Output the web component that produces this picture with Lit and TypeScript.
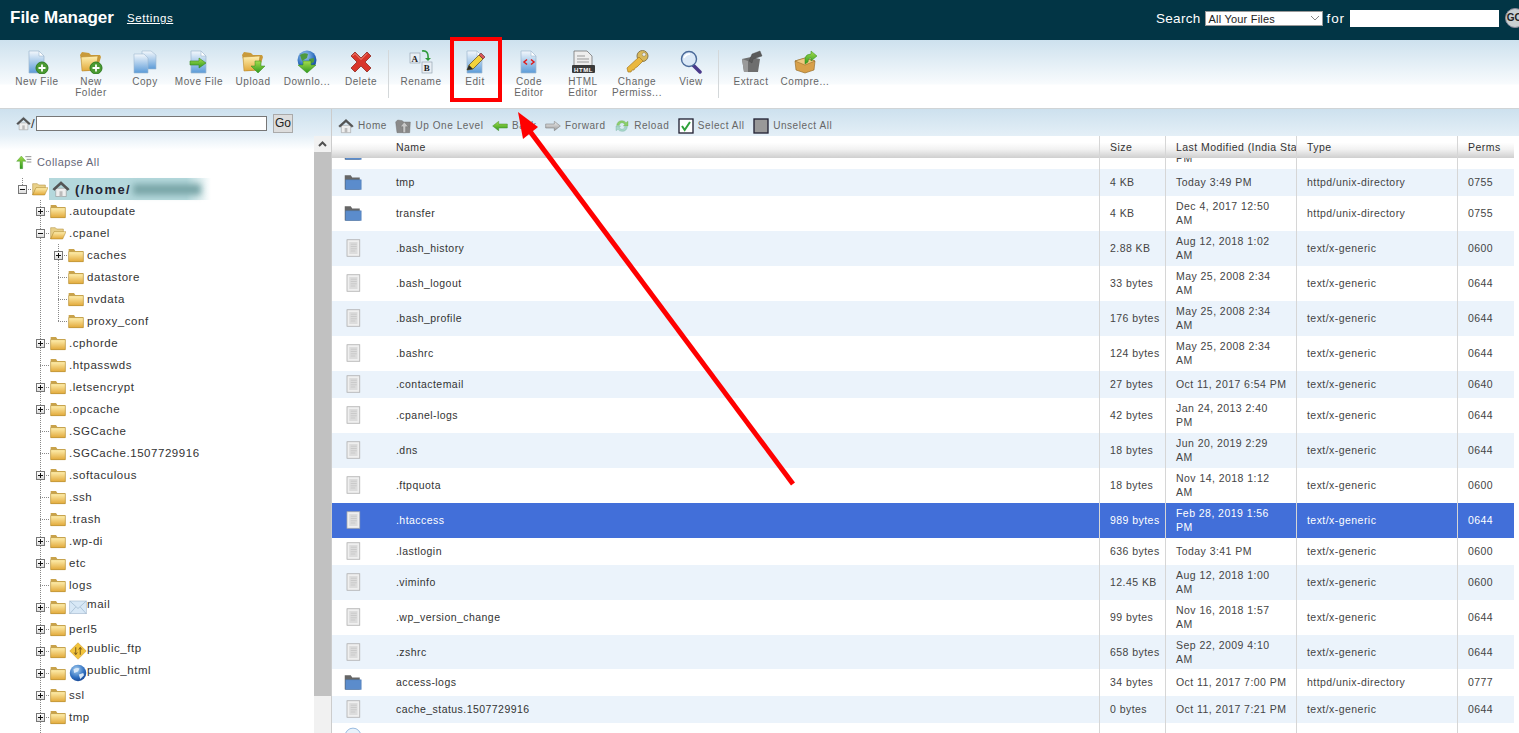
import { LitElement, html, css, svg } from "lit";
import { customElement } from "lit/decorators.js";

const defs = svg`
  <linearGradient id="paper" x1="0" y1="0" x2="0" y2="1"><stop offset="0" stop-color="#f4f8fc"/><stop offset="1" stop-color="#5b9bd8"/></linearGradient>
  <linearGradient id="fold" x1="0" y1="0" x2="0" y2="1"><stop offset="0" stop-color="#fff0b0"/><stop offset="1" stop-color="#e2a93a"/></linearGradient>
  <linearGradient id="grn" x1="0" y1="0" x2="0" y2="1"><stop offset="0" stop-color="#a5dc4c"/><stop offset="1" stop-color="#2f9a1e"/></linearGradient>
  <linearGradient id="gry" x1="0" y1="0" x2="0" y2="1"><stop offset="0" stop-color="#f0f0f0"/><stop offset="1" stop-color="#9a9a9a"/></linearGradient>
  <radialGradient id="globe" cx=".4" cy=".3" r=".8"><stop offset="0" stop-color="#a9d2f2"/><stop offset=".6" stop-color="#2f6fc0"/><stop offset="1" stop-color="#123d88"/></radialGradient>
`;

// shared gradients live in one hidden svg at the top of the page
const doc = (extra: unknown = "") => svg`
  <path d="M4 1h10l5 5v17H4z" fill="url(#paper)" stroke="#9fb8d0" stroke-width=".7"/>
  <path d="M14 1v5h5z" fill="#fff" stroke="#9fb8d0" stroke-width=".6"/>
  ${extra}`;

const plusBadge = svg`
  <circle cx="17" cy="18" r="6" fill="#4a9a32" stroke="#2f7d20"/>
  <path d="M17 14.500v7M13.500 18h7" stroke="#fff" stroke-width="1.800"/>`;

const yellowFolder = svg`
  <path d="M1 5l2-3 7 1 2 2 9 0 1 2-4 13-13 1z" fill="#c99a3a"/>
  <path d="M2 7l17-1-2 14-14 1z" fill="url(#fold)" stroke="#b98a2e" stroke-width=".6"/>`;

const icons: Record<string, unknown> = {
  newfile: svg`${doc()}${plusBadge}`,
  newfolder: svg`${yellowFolder}${plusBadge}`,
  copy: svg`
    <path d="M9 1h9l5 4v14H9z" fill="url(#paper)" stroke="#9fb8d0" stroke-width=".6"/>
    <path d="M1 4h10l4 4v15H1z" fill="url(#paper)" stroke="#9fb8d0" stroke-width=".6"/>`,
  move: svg`${doc(svg`<path d="M3 11h9V8l7 5-7 5v-3H3z" fill="url(#grn)" stroke="#3b8a22" stroke-width=".6"/>`)}`,
  upload: svg`${yellowFolder}<path d="M14 11h6v5h4l-7 7-7-7h4z" fill="url(#grn)" stroke="#2f8a1e" stroke-width=".5"/>`,
  download: svg`
    <circle cx="12" cy="10" r="9.500" fill="url(#globe)"/>
    <path d="M5 5q4-3 8-1l-1 4-5 3zM14 9l5-1 0 4-4 2z" fill="#4f9a3e"/>
    <path d="M8 11h8v4h5l-9 8-9-8h5z" fill="url(#grn)" stroke="#2f8a1e" stroke-width=".5"/>`,
  delete: svg`<path d="M2 6l4-4 6 6 6-6 4 4-6 6 6 6-4 4-6-6-6 6-4-4 6-6z" fill="#d8352a" stroke="#8e2a20" stroke-width=".8"/>
    <path d="M3.500 6l2.500-2.500 6 6 6-6" fill="none" stroke="#f28b7a" stroke-width="1"/>`,
  rename: svg`
    <rect x="1" y="3" width="10" height="10" fill="#e8eef4" stroke="#8a9aa8" stroke-width=".6"/>
    <text x="6" y="11.500" font-size="9" font-weight="700" text-anchor="middle" font-family="Liberation Serif" fill="#222">A</text>
    <rect x="13" y="12" width="10" height="11" fill="#e8eef4" stroke="#8a9aa8" stroke-width=".6"/>
    <text x="18" y="21" font-size="9" font-weight="700" text-anchor="middle" font-family="Liberation Serif" fill="#222">B</text>
    <path d="M13 1q7-1 6 8" fill="none" stroke="#2f9a3a" stroke-width="1.600"/><path d="M16 8h6l-3 3z" fill="#2f9a3a"/>`,
  edit: svg`${doc(svg`
    <path d="M4 20l2-5L16 5l4 4-10 10z" fill="#f3d23c" stroke="#5a4a1a" stroke-width=".7"/>
    <path d="M16 5l2-2 4 4-2 2z" fill="#d8585a" stroke="#5a2a2a" stroke-width=".6"/>
    <path d="M4 20l2-5 4 4z" fill="#2a2a2a"/>`)}`,
  code: svg`${doc(svg`<path d="M10 9.500l-3 2.500 3 2.500M14 9.500l3 2.500-3 2.500" fill="none" stroke="#e01818" stroke-width="1.500"/>`)}`,
  htmled: svg`
    <path d="M3 1h13l5 5v11H3z" fill="#eee" stroke="#666" stroke-width=".7"/>
    <path d="M6 6h8M6 9h12M6 12h12" stroke="#999"/>
    <rect x="1" y="15" width="23" height="8" rx="1" fill="#3a3a3a"/>
    <text x="12.500" y="21.500" font-size="6" font-weight="700" text-anchor="middle" font-family="Liberation Sans" fill="#fff">HTML</text>`,
  key: svg`
    <circle cx="17.500" cy="6" r="5.500" fill="#d8b85a" stroke="#8a7a50"/>
    <circle cx="19" cy="4.500" r="1.800" fill="#e8eef4" stroke="#8a7a50" stroke-width=".5"/>
    <path d="M14 7L2 18l1 4 3 0 1-2 2 0 1-2 2-1 6-6z" fill="#eab83e" stroke="#a67a20" stroke-width=".7"/>`,
  view: svg`
    <path d="M14 15l7 7" stroke="#4a3a8a" stroke-width="3.500" stroke-linecap="round"/>
    <circle cx="10" cy="9" r="7.500" fill="#dbe9f7" stroke="#4a6a9a" stroke-width="1.400"/>
    <path d="M5 8q2-4 6-4" fill="none" stroke="#fff" stroke-width="1.600"/>`,
  extract: svg`
    <path d="M3 9l9-2 9 2-2 13H5z" fill="#6e6e6e"/>
    <path d="M3 9l6 2v11H5z" fill="#9a9a9a"/>
    <path d="M10 11l3-7 8-3 2 5-9 3-1 4z" fill="#5a5a5a" stroke="#444" stroke-width=".4"/>`,
  compress: svg`
    <path d="M2 11l10-3 10 3-1 9-9 3-9-3z" fill="#d8a04a" stroke="#8e6420" stroke-width=".6"/>
    <path d="M2 11l10 4 10-4-10-3z" fill="#f0c880" stroke="#8e6420" stroke-width=".5"/>
    <path d="M12 14V8q1-4 6-4V1l6 5-6 5V8q-3 0-3 4z" fill="url(#grn)" stroke="#2f8a1e" stroke-width=".5"/>`,
  home: svg`
    <path d="M5 11h14v11H5z" fill="#eee" stroke="#888" stroke-width=".7"/>
    <path d="M1 12L12 2l11 10-2 2-9-8-9 8z" fill="#555" stroke="#333" stroke-width=".5"/>
    <path d="M10 15h4v7h-4z" fill="#bbb"/>`,
  up: svg`
    <path d="M1 6l3-3 7 1 2 2 10 0-1 16H3z" fill="#8a8a8a" stroke="#666" stroke-width=".6"/>
    <path d="M12 22V13H8l6-7 6 7h-4v9z" fill="#c8c8c8" stroke="#666" stroke-width=".6"/>`,
  back: svg`<path d="M1 12l9-7v4h13v6H10v4z" fill="url(#grn)" stroke="#3b8a22" stroke-width=".7"/>`,
  forward: svg`<path d="M23 12l-9-7v4H1v6h13v4z" fill="url(#gry)" stroke="#777" stroke-width=".8"/>`,
  reload: svg`
    <path d="M4 11q1-7 8-7 4 0 6 3l3-2v7h-7l2-2q-1-3-4-3-4 0-4 4z" fill="#8ccf6a" stroke="#5aa24a" stroke-width=".5"/>
    <path d="M20 13q-1 7-8 7-4 0-6-3l-3 2v-7h7l-2 2q1 3 4 3 4 0 4-4z" fill="#a8d8c8" stroke="#6aa89a" stroke-width=".5"/>`,
  selectall: svg`
    <rect x="1.500" y="1.500" width="21" height="21" fill="#fff" stroke="#223" stroke-width="2"/>
    <path d="M6 12l4 6 8-12" fill="none" stroke="#2fa13a" stroke-width="3"/>`,
  unselect: svg`<rect x="1.500" y="1.500" width="21" height="21" fill="#999" stroke="#223" stroke-width="2"/>`,
  collapse: svg`
    <path d="M6 22V11H1l7-8 7 8h-5v11z" fill="url(#grn)" stroke="#2f8a1e" stroke-width=".5"/>
    <path d="M14 4h9M16 8h7M16 12h7" stroke="#888" stroke-width="1.400"/>`,
  closed: svg`
    <path d="M1 6V3h8l2 3h12v16H1z" fill="#c9a24a"/>
    <path d="M1 7h22v15H1z" fill="url(#fold)" stroke="#a98020" stroke-width=".7"/>`,
  open: svg`
    <path d="M1 21V4h7l2 2h10v5H6z" fill="#e8d08a" stroke="#a98020" stroke-width=".7"/>
    <path d="M1 21l5-11h18l-5 11z" fill="url(#fold)" stroke="#a98020" stroke-width=".7"/>`,
  mail: svg`
    <rect x="1" y="4" width="22" height="17" fill="#d8e8f6" stroke="#9ab0c4" stroke-width=".7"/>
    <path d="M1 4l11 10L23 4M1 21l8-9M23 21l-8-9" fill="none" stroke="#8aa6c0" stroke-width=".7"/>`,
  ftp: svg`
    <path d="M12 1l11 11-11 11L1 12z" fill="#f2c43c" stroke="#c9962a" stroke-width=".7"/>
    <path d="M9 7v9M7 14l2 3 2-3M15 17V8M13 10l2-3 2 3" fill="none" stroke="#7a5a1a" stroke-width="1.300"/>`,
  www: svg`
    <circle cx="12" cy="12" r="11" fill="url(#globe)"/>
    <path d="M6 7q5-3 8-1l-2 4-5 2zM13 14l6-2 1 3-5 5z" fill="#d8e8f8"/>`,
  blueFolder: svg`
    <path d="M1 22V3h8l2 3h10v16z" fill="#666"/>
    <path d="M2 9h21v13H2z" fill="#5b8ccc" stroke="#4a74ad" stroke-width=".6"/>`,
  file: svg`
    <rect x="4" y="1" width="17" height="22" fill="#efefef" stroke="#aaa" stroke-width="1"/>
    <rect x="7" y="4" width="11" height="16" fill="#dcdcdc"/>
    <path d="M9 7h8M9 10h8M9 13h8M9 16h6" stroke="#c4c4c4"/>`,
  webfile: svg`
    <circle cx="12" cy="12" r="10.500" fill="#e8f2fb" stroke="#7aa6d6"/>`,
};

const icon = (name: string, size = 16) =>
  html`<svg class="ico" width=${size} height=${size} viewBox="0 0 24 24">${icons[name]}</svg>`;

const tools: (string[] | null)[] = [
  ["newfile", "New File"],
  ["newfolder", "New Folder"],
  ["copy", "Copy"],
  ["move", "Move File"],
  ["upload", "Upload"],
  ["download", "Downlo..."],
  ["delete", "Delete"],
  null,
  ["rename", "Rename"],
  ["edit", "Edit"],
  ["code", "Code Editor"],
  ["htmled", "HTML Editor"],
  ["key", "Change Permiss..."],
  ["view", "View"],
  null,
  ["extract", "Extract"],
  ["compress", "Compre..."],
];

const navItems = [
  ["home", "Home"],
  ["up", "Up One Level"],
  ["back", "Back"],
  ["forward", "Forward"],
  ["reload", "Reload"],
  ["selectall", "Select All"],
  ["unselect", "Unselect All"],
];

// depth, label, state (+ has children, - open, blank leaf), extra icon, last child
const tree: [number, string, string, string?, boolean?][] = [
  [1, ".autoupdate", "+"],
  [1, ".cpanel", "-"],
  [2, "caches", "+"],
  [2, "datastore", ""],
  [2, "nvdata", ""],
  [2, "proxy_conf", "", undefined, true],
  [1, ".cphorde", "+"],
  [1, ".htpasswds", ""],
  [1, ".letsencrypt", "+"],
  [1, ".opcache", "+"],
  [1, ".SGCache", ""],
  [1, ".SGCache.1507729916", ""],
  [1, ".softaculous", "+"],
  [1, ".ssh", ""],
  [1, ".trash", ""],
  [1, ".wp-di", "+"],
  [1, "etc", "+"],
  [1, "logs", ""],
  [1, "mail", "+", "mail"],
  [1, "perl5", "+"],
  [1, "public_ftp", "+", "ftp"],
  [1, "public_html", "+", "www"],
  [1, "ssl", "+"],
  [1, "tmp", "+"],
  [1, "", "+"],
];

const dir = "httpd/unix-directory";
const txt = "text/x-generic";
// name, size, modified, type, perms, row class
const files: string[][] = [
  ["tmp", "4 KB", "Today 3:49 PM", dir, "0755", "short"],
  ["transfer", "4 KB", "Dec 4, 2017 12:50 AM", dir, "0755", "tall"],
  [".bash_history", "2.88 KB", "Aug 12, 2018 1:02 AM", txt, "0600", "tall"],
  [".bash_logout", "33 bytes", "May 25, 2008 2:34 AM", txt, "0644", "tall"],
  [".bash_profile", "176 bytes", "May 25, 2008 2:34 AM", txt, "0644", "tall"],
  [".bashrc", "124 bytes", "May 25, 2008 2:34 AM", txt, "0644", "tall"],
  [".contactemail", "27 bytes", "Oct 11, 2017 6:54 PM", txt, "0640", "short"],
  [".cpanel-logs", "42 bytes", "Jan 24, 2013 2:40 PM", txt, "0644", "tall"],
  [".dns", "18 bytes", "Jun 20, 2019 2:29 AM", txt, "0644", "tall"],
  [".ftpquota", "18 bytes", "Nov 14, 2018 1:12 AM", txt, "0600", "tall"],
  [".htaccess", "989 bytes", "Feb 28, 2019 1:56 PM", txt, "0644", "tall picked"],
  [".lastlogin", "636 bytes", "Today 3:41 PM", txt, "0600", "short"],
  [".viminfo", "12.45 KB", "Aug 12, 2018 1:00 AM", txt, "0600", "tall"],
  [".wp_version_change", "99 bytes", "Nov 16, 2018 1:57 AM", txt, "0644", "tall"],
  [".zshrc", "658 bytes", "Sep 22, 2009 4:10 AM", txt, "0644", "tall z"],
  ["access-logs", "34 bytes", "Oct 11, 2017 7:00 PM", dir, "0777", "short"],
  ["cache_status.1507729916", "0 bytes", "Oct 11, 2017 7:21 PM", txt, "0644", "short"],
];

@customElement("app-root")
export class AppRoot extends LitElement {
  static styles = css`
    :host {
      display: block;
      height: 100vh;
      overflow: hidden;
      position: relative;
      font-family: "Liberation Sans", Arial, sans-serif;
      background: #fff;
    }
    .ico { display: block; flex: none; }
    .defs { width: 0; height: 0; display: block; }

    .top {
      height: 40px;
      box-sizing: border-box;
      padding: 0 0 4px 10px;
      background: #023545;
      color: #fff;
      display: flex;
      align-items: center;
    }
    .title { font-size: 17px; font-weight: 700; }
    .settings {
      font-size: 11.5px;
      margin-left: 13px;
      color: #fff;
      text-decoration: underline;
      letter-spacing: .6px;
    }
    .search {
      margin-left: auto;
      display: flex;
      align-items: center;
      font-size: 13.5px;
      letter-spacing: .3px;
      width: 363px;
      flex: none;
    }
    .for { letter-spacing: .8px; }
    .dropdown {
      width: 118px;
      flex: none;
      height: 15px;
      margin: 1px 4px 0 4px;
      background: #fff;
      border: 1px solid #999;
      box-sizing: border-box;
      color: #222;
      font-size: 11px;
      line-height: 14px;
      padding-left: 3px;
      letter-spacing: .2px;
      display: flex;
      justify-content: space-between;
      align-items: center;
    }
    .dropdown svg { margin-right: 3px; }
    .q { width: 149px; height: 17px; background: #fff; margin: 0 6px 0 5px; flex: none; }
    .go {
      width: 20px;
      height: 20px;
      flex: none;
      border-radius: 50%;
      background: #c9d0d2;
      border: 1px solid #889;
      box-sizing: border-box;
      color: #222;
      font-size: 10px;
      font-weight: 700;
      line-height: 18px;
      padding-left: 1px;
      overflow: hidden;
      letter-spacing: 0;
    }

    .toolbar {
      height: 69px;
      box-sizing: border-box;
      background: linear-gradient(#cde1ee, #f8fbfd 44px, #fff 45px);
      border-bottom: 1px solid #d0d4d6;
      display: flex;
      padding: 10px 0 0 10px;
    }
    .tool {
      width: 54px;
      flex: none;
      display: flex;
      flex-direction: column;
      align-items: center;
      font-size: 10px;
      line-height: 11px;
      letter-spacing: .55px;
      color: #666;
      text-align: center;
    }
    .tool .ico { margin-bottom: 2px; }
    .tool span { width: 50px; }
    .sep { width: 1px; height: 48px; background: #d4d8da; flex: none; margin-right: 5px; }

    .main { display: flex; height: 624px; }
    .left {
      width: 331px;
      flex: none;
      display: flex;
      flex-direction: column;
      background: linear-gradient(#cde1ee, #e4eff7 26px, #fff 41px);
      border-right: 1px solid #ccc;
    }
    .path {
      height: 27px;
      flex: none;
      box-sizing: border-box;
      display: flex;
      align-items: center;
      padding: 2px 0 0 16px;
      font-size: 13px;
      color: #333;
    }
    .path .slash { width: 5px; }
    .path .field {
      width: 231px;
      height: 15px;
      box-sizing: border-box;
      background: #fff;
      border: 1px solid #777;
    }
    .path .gobtn {
      margin-left: 6px;
      width: 20px;
      height: 19px;
      box-sizing: border-box;
      background: #ddd;
      border: 1px solid #aaa;
      color: #222;
      font-size: 12px;
      line-height: 17px;
      text-align: center;
    }
    .leftbody { flex: 1; display: flex; min-height: 0; }
    .treewrap { width: 314px; flex: none; overflow: hidden; }
    .collapse {
      display: flex;
      align-items: center;
      gap: 5px;
      padding: 18px 0 0 16px;
      height: 16px;
      font-size: 11px;
      letter-spacing: .42px;
      color: #667;
    }
    .tree { margin-top: 8px; }
    .row {
      height: 22px;
      display: flex;
      align-items: center;
      padding-left: 13px;
      font-size: 11.5px;
      letter-spacing: .55px;
      color: #333;
      white-space: nowrap;
    }
    .row .cell {
      width: 18px;
      height: 22px;
      flex: none;
      display: flex;
      align-items: center;
      justify-content: center;
    }
    .vline {
      background: repeating-linear-gradient(#888 0 1px, transparent 1px 2px) 9px 0 / 1px 100% no-repeat;
    }
    .branch {
      background:
        repeating-linear-gradient(#888 0 1px, transparent 1px 2px) 9px 0 / 1px 100% no-repeat,
        repeating-linear-gradient(90deg, #888 0 1px, transparent 1px 2px) 9px 11px / 9px 1px no-repeat;
    }
    .branch.end {
      background:
        repeating-linear-gradient(#888 0 1px, transparent 1px 2px) 9px 0 / 1px 12px no-repeat,
        repeating-linear-gradient(90deg, #888 0 1px, transparent 1px 2px) 9px 11px / 9px 1px no-repeat;
    }
    .toggle {
      width: 9px;
      height: 9px;
      box-sizing: border-box;
      border: 1px solid #777;
      background: linear-gradient(#fff, #ddd);
      display: block;
    }
    .toggle svg { display: block; }
    .row .fold { margin-left: 1px; margin-right: 3px; width: 16px; }
    .row .fold.rootfold { margin-right: 1px; }
    .row .special { align-self: flex-start; margin-top: 2px; }
    .rootlabel {
      display: flex;
      align-items: center;
      height: 22px;
      width: 162px;
      background: linear-gradient(90deg, #b4d8dc 85%, #fff);
      font-weight: 700;
      font-size: 13px;
      letter-spacing: 1.4px;
      color: #223;
    }
    .rootlabel .ico { margin: 0 5px 0 3px; }
    .blurred {
      width: 68px;
      height: 11px;
      margin-left: 2px;
      background: #7aa6a8;
      filter: blur(3px);
    }
    .scroll {
      width: 17px;
      flex: none;
      background: #f1f1f1;
      display: flex;
      flex-direction: column;
      align-items: center;
    }
    .scroll .arrow { height: 16px; display: flex; align-items: center; }
    .scroll .thumb { width: 100%; height: 544px; background: #c1c1c1; }

    .right { flex: 1; min-width: 0; display: flex; flex-direction: column; }
    .nav {
      height: 27px;
      flex: none;
      box-sizing: border-box;
      padding: 6px 0 0 6px;
      background: linear-gradient(#cde1ee, #e4eff7);
      display: flex;
      align-items: center;
      gap: 8.5px;
      font-size: 10px;
      letter-spacing: .57px;
      color: #666;
    }
    .nav .item { display: flex; align-items: center; gap: 4px; }
    .grid {
      display: grid;
      grid-template-columns: 767px 66px 131px 161px 57px;
      width: 1182px;
    }
    .grid > div {
      box-sizing: border-box;
      border-left: 1px solid #d6d6d6;
      padding-left: 10px;
      display: flex;
      align-items: center;
      overflow: hidden;
    }
    .grid > div:first-child { border-left: 0; padding-left: 12px; }
    .head {
      height: 22px;
      background: linear-gradient(#fff 30%, #f2f2f2 60%, #cfcfcf);
      font-size: 10.5px;
      letter-spacing: .45px;
      color: #333;
      white-space: nowrap;
    }
    .head .nm { padding-left: 64px !important; }
    .body { flex: 1; overflow: hidden; }
    .file {
      font-size: 10.5px;
      line-height: 14px;
      letter-spacing: .45px;
      color: #444;
    }
    .file > div { height: 100%; padding-bottom: 1px; }
    .file.short { height: 27px; }
    .file.tall { height: 35px; }
    .file.z { height: 34px; }
    .file.cut { height: 11px; }
    .file.cut > div { align-items: flex-end; padding-bottom: 0; }
    .file.cut span { margin-bottom: 4px; }
    .file.cut .ico { margin-bottom: 8px; }
    .file.stripe { background: #ebf3fb; }
    .file.picked { background: #426fd9; color: #fff; }
    .file .name { gap: 34px; color: #333; }
    .file.picked .name { color: #fff; }
    .file .date { padding-right: 18px; }
    .file.short .date { padding-right: 0; white-space: nowrap; }

    .overlay { position: absolute; left: 0; top: 0; pointer-events: none; }
    .mark {
      position: absolute;
      left: 450px;
      top: 37px;
      width: 52px;
      height: 65px;
      box-sizing: border-box;
      border: 4px solid #f00;
    }
  `;

  renderRow(r: [number, string, string, string?, boolean?]) {
    const [depth, label, state, extra, last] = r;
    const isOpen = state === "-";
    return html`<div class="row">
      <span class="cell"></span>
      ${depth === 2 ? html`<span class="cell vline"></span>` : ""}
      <span class="cell ${last ? "branch end" : "branch"}">${state ? this.toggle(isOpen) : ""}</span>
      <span class="fold">${icon(isOpen ? "open" : "closed")}</span>
      ${extra ? html`<span>${icon(extra, 18)}</span>` : ""}
      <span class=${extra ? "special" : ""}>${label}</span>
    </div>`;
  }

  toggle(open: boolean) {
    return html`<span class="toggle"
      ><svg width="7" height="7" viewBox="0 0 7 7">
        <path d=${open ? "M1 3.500h5" : "M1 3.500h5M3.500 1v5"} stroke="#111" />
      </svg></span
    >`;
  }

  render() {
    return html`
      <svg class="defs">${defs}</svg>
      <div class="top">
        <span class="title">File Manager</span>
        <a class="settings">Settings</a>
        <div class="search">
          Search
          <div class="dropdown">
            All Your Files
            <svg width="8" height="5" viewBox="0 0 8 5"><path d="M0 0l4 4 4-4" fill="none" stroke="#888" /></svg>
          </div>
          <span class="for">for</span>
          <div class="q"></div>
          <div class="go">GO</div>
        </div>
      </div>

      <div class="toolbar">
        ${tools.map((t) =>
          t
            ? html`<div class="tool">${icon(t[0], 24)}<span>${t[1]}</span></div>`
            : html`<div class="sep"></div>`
        )}
      </div>

      <div class="main">
        <div class="left">
          <div class="path">
            ${icon("home", 15)}<span class="slash">/</span>
            <div class="field"></div>
            <div class="gobtn">Go</div>
          </div>
          <div class="leftbody">
            <div class="treewrap">
              <div class="collapse">${icon("collapse", 16)}Collapse All</div>
              <div class="tree">
                <div class="row">
                  <span class="cell branch end">${this.toggle(true)}</span>
                  <span class="fold rootfold">${icon("open")}</span>
                  <div class="rootlabel">${icon("home", 18)}(/home/<span class="blurred"></span></div>
                </div>
                ${tree.map((r) => this.renderRow(r))}
              </div>
            </div>
            <div class="scroll">
              <div class="arrow">
                <svg width="9" height="6" viewBox="0 0 9 6"><path d="M1 5l3.500-3.500L8 5" fill="none" stroke="#505050" stroke-width="2" /></svg>
              </div>
              <div class="thumb"></div>
            </div>
          </div>
        </div>

        <div class="right">
          <div class="nav">
            ${navItems.map((n) => html`<div class="item">${icon(n[0], 16)}${n[1]}</div>`)}
          </div>
          <div class="grid head">
            <div class="nm">Name</div>
            <div>Size</div>
            <div>Last Modified (India Standard Time)</div>
            <div>Type</div>
            <div>Perms</div>
          </div>
          <div class="body">
            <div class="grid file cut">
              <div class="name">${icon("blueFolder", 18)}</div>
              <div></div>
              <div><span>PM</span></div>
              <div></div><div></div>
            </div>
            ${files.map(
              (f, i) => html`<div class="grid file ${f[5]} ${i % 2 === 0 ? "stripe" : ""}">
                <div class="name">${icon(f[3] === dir ? "blueFolder" : "file", 18)}<span>${f[0]}</span></div>
                <div>${f[1]}</div>
                <div class="date">${f[2]}</div>
                <div>${f[3]}</div>
                <div>${f[4]}</div>
              </div>`
            )}
            <div class="grid file short">
              <div class="name">${icon("webfile", 18)}</div>
              <div></div><div></div><div></div><div></div>
            </div>
          </div>
        </div>
      </div>

      <div class="mark"></div>
      <svg class="overlay" width="1519" height="733">
        <path d="M793 484L526 126" stroke="#f00" stroke-width="5" />
        <path d="M518 112L523 139L538 127z" fill="#f00" />
      </svg>
    `;
  }
}
